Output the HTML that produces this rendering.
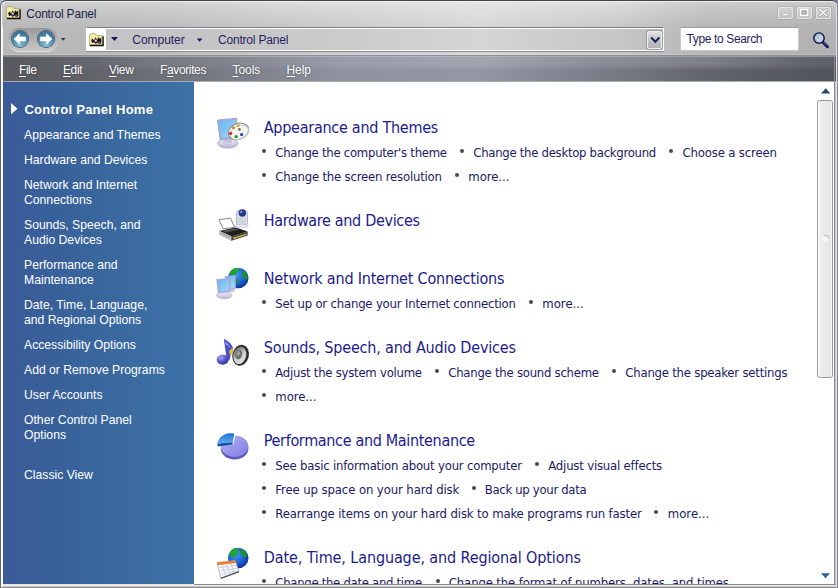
<!DOCTYPE html>
<html lang="en">
<head>
<meta charset="utf-8">
<title>Control Panel</title>
<style>
*{box-sizing:border-box;margin:0;padding:0}
html,body{width:838px;height:588px;overflow:hidden;background:#8a8a8a}
body{position:relative;font-family:"Liberation Sans",sans-serif;font-size:13px;color:#1a1a6e}
.abs{position:absolute;white-space:nowrap}
#win{position:absolute;left:0;top:0;width:838px;height:588px;background:#c6c6c6;border-radius:6px 6px 0 0;overflow:hidden}
#frame{position:absolute;left:0;top:0;width:838px;height:588px;border:1px solid #666;border-top-color:#444;border-right:1.3px solid #80849a;border-bottom:1.5px solid #8a8a8a;border-radius:6px 6px 0 0;z-index:50;pointer-events:none}
#frame2{position:absolute;left:1px;top:1px;width:836px;height:585.5px;border-left:2px solid #fafafa;border-top:1px solid #f0f0f0;border-radius:6px 6px 0 0;z-index:49;pointer-events:none}
#fr{position:absolute;left:835.5px;top:3px;width:1.1px;height:583.5px;background:#e6e6e6;z-index:48}
#fb{position:absolute;left:1px;top:585.2px;width:835.6px;height:1.3px;background:#ececec;z-index:48}
#fb2{position:absolute;left:1px;top:583.6px;width:193px;height:2px;background:#ece6e0;z-index:47}
#gr{position:absolute;left:834.2px;top:55px;width:1.3px;height:530.3px;background:#8c8c8c;z-index:47}
#gb{position:absolute;left:194px;top:583.6px;width:641.5px;height:1.7px;background:#8a8a8a;z-index:47}
#titlebar{position:absolute;left:0;top:0;width:838px;height:56px;background:linear-gradient(#dcdcdc 0,#d2d2d2 8px,#c8c8c8 20px,#c2c2c2 27px,#c0c0c0 50px,#c0c0c0 53.6px,#cbcbcd 54px,#cbcbcd 55px,#8e8e92 55px,#8e8e92 56px)}
#titleshade{position:absolute;left:0;top:0;width:838px;height:55px;background:linear-gradient(90deg,rgba(0,0,0,.05) 0,rgba(0,0,0,.03) 150px,rgba(255,255,255,.10) 300px,rgba(255,255,255,.34) 480px,rgba(255,255,255,.10) 620px,rgba(0,0,0,.05) 700px,rgba(0,0,0,.08) 838px)}
#title{left:26.2px;top:6.8px;font-size:12px;color:#1e1e4e;line-height:15px;letter-spacing:-.2px}
.tt{font-size:12px;color:#1e1e5a;line-height:15px;letter-spacing:-.2px;top:33px}
#navpill{position:absolute;left:7.5px;top:27.5px;width:50px;height:23.5px;border-radius:12px;background:linear-gradient(#999,#adadad 40%,#c8c8c8);box-shadow:0 1px 0 rgba(255,255,255,.6)}
.orb{position:absolute;top:30.8px;width:16px;height:16px;border-radius:50%;background:radial-gradient(circle at 50% 88%,#84c2d2 0,#5492b6 40%,#40789f 70%,#2f6288 100%);box-shadow:0 0 0 1px rgba(40,78,108,.85)}
#addr{position:absolute;left:86px;top:27px;width:578px;height:24px;border:1px solid #fff;border-top-color:#7e7e7e;background:linear-gradient(90deg,#c3c3c5 0,#c5c5c7 120px,#c9c9ca 215px,#d5d5d6 393px,#c6c6c7 533px,#bebebf 578px);box-shadow:inset 0 1px 0 #fff,0 1px 0 #8c8c8c}
#addrico{position:absolute;left:0;top:1px;width:19px;height:21px;background:#fff}
#addrbtn{position:absolute;left:647px;top:30.5px;width:15px;height:18px;border:1px solid #f2f2f2;border-radius:2px;background:linear-gradient(#e4e4e4,#c4c4c6 50%,#b4b4b8);box-shadow:0 0 0 1px #9a9a9e}
#search{position:absolute;left:680px;top:27px;width:119px;height:24px;background:#fff;border:1px solid #c9c9c9;border-top-color:#9c9c9c}
.wb{position:absolute;top:6.7px;width:15px;height:12px;border-radius:2px;background:linear-gradient(#d4d4d4,#c2c2c2);box-shadow:inset 0 0 0 1px rgba(232,232,232,.9),0 0 0 1px rgba(150,150,150,.35)}
#menubar{position:absolute;left:0;top:56px;width:838px;height:26px;background:linear-gradient(90deg,#585a60 0,#5c5e64 50px,#62646a 94px,#6c6e76 146px,#787a84 218px,#9092a0 340px,#9496a4 480px,#787a86 610px,#62646c 710px,#54565e 810px,#52545c 838px)}
#menutop{position:absolute;left:0;top:0;width:838px;height:26px;background:linear-gradient(90deg,#585a60 0,#5e6066 50px,#666870 94px,#767880 146px,#80828c 218px,#9a9caa 340px,#a2a4b0 480px,#8a8c98 610px,#7e8088 710px,#62646c 810px,#5e6068 838px);-webkit-mask-image:linear-gradient(#000 0,#000 32%,transparent 56%);mask-image:linear-gradient(#000 0,#000 32%,transparent 56%)}
#menuhi{position:absolute;left:0;top:0;width:838px;height:1px;background:linear-gradient(90deg,#85878d 0,#a0a2a8 120px,#b6b8c2 420px,#a0a2aa 700px,#8e9096 838px)}
#menubot{position:absolute;left:0;top:25px;width:838px;height:1px;background:#a9abb3}
.menu{color:#fff;font-size:12px;line-height:15px;top:62.5px;text-shadow:0 0 2px rgba(30,30,36,.55)}
.menu u{text-decoration:underline;text-underline-offset:1.6px;text-decoration-thickness:1px}
#side{position:absolute;left:3px;top:82px;width:191px;height:501.6px;background:linear-gradient(90deg,#3a5a98 0,#38619a 30%,#3a6aa0 65%,#3c73a9 100%)}
#main{position:absolute;left:194px;top:82px;width:640px;height:501.6px;background:#fff}
#thumb{position:absolute;left:817.3px;top:99.8px;width:16px;height:277.8px;border:1px solid #999;border-radius:2.5px;background:linear-gradient(90deg,#f4f4f4 0,#ebebeb 30%,#e6e6e6 100%);box-shadow:inset 1px 0 0 #fff,inset -1px 0 0 #f6f6f6}
.s{color:#fff;font-size:12.2px;line-height:15px;left:24px}
.h{font-family:"DejaVu Sans Condensed","Liberation Sans",sans-serif;font-size:16px;line-height:20px;color:#1b1b8c;left:263px}
.t{font-family:"DejaVu Sans Condensed","Liberation Sans",sans-serif;font-size:13px;line-height:16px;color:#1a1a66}
#content{position:absolute;left:0;top:0;width:838px;height:583.6px;overflow:hidden}
.b{position:absolute;width:4px;height:4px;background:#4c4c4c;border-radius:50%}
</style>
</head>
<body>
<div style="position:absolute;left:0;top:0;width:10px;height:10px;background:#b0c0e0"></div><div style="position:absolute;left:828px;top:0;width:10px;height:10px;background:#7c82a2"></div>
<div id="win">
<div id="titlebar"><div id="titleshade"></div></div>
<div class="abs" id="title">Control Panel</div>
<svg class="abs" style="left:6.3px;top:5.8px" width="16" height="14" viewBox="0 0 16 14"><path d="M0.5 12 V2.1 L1.8 0.7 H6.4 L7.8 2.6 H13.6 V12 Z" fill="#f4f0a8" stroke="#9a9462" stroke-width=".7"/><path d="M0.9 12.5 H14.1 V3.2" fill="none" stroke="#0c0c0c" stroke-width="1.3"/><g transform="translate(7.2 7.4) scale(1.12 1.22) translate(-7.3 -7.2)"><path d="M2.8 7 L4 5.6 L5.4 7.2 L6.8 4.6 L8.2 6.8 L9.4 4.4 L10.6 6 L11.8 4.4 V9.7 L9.6 9.9 L8.4 8.9 L7 9.9 L5.4 8.7 L3.6 9.3 Z" fill="#121018"/><circle cx="6.9" cy="7.5" r="1.05" fill="#f6e4f0"/><circle cx="6.9" cy="9" r=".95" fill="#3a1c6c"/><rect x="9.2" y="8" width="1.7" height="1.8" fill="#7c5a12"/></g></svg>
<div class="wb" style="left:777.5px"><svg width="15" height="12" viewBox="0 0 15 12"><rect x="4.6" y="6.6" width="5.4" height="2.2" rx=".8" fill="#fff" stroke="#9a9a9a" stroke-width=".5"/></svg></div>
<div class="wb" style="left:797px"><svg width="15" height="12" viewBox="0 0 15 12"><rect x="3.6" y="2.4" width="7" height="6" fill="none" stroke="#fff" stroke-width="1.3"/><rect x="5.2" y="4" width="3.8" height="2.8" fill="none" stroke="#8e8e8e" stroke-width=".7"/></svg></div>
<div class="wb" style="left:816px"><svg width="15" height="12" viewBox="0 0 15 12"><path d="M3.6 2.2 L10.8 8.8 M10.8 2.2 L3.6 8.8" stroke="#9c9c9c" stroke-width="2.6" stroke-linecap="round"/><path d="M3.6 2.2 L10.8 8.8 M10.8 2.2 L3.6 8.8" stroke="#fff" stroke-width="1.5" stroke-linecap="round"/></svg></div>
<svg class="abs" style="left:811px;top:31px" width="19" height="18" viewBox="0 0 19 18"><defs><linearGradient id="lens" x1="0" y1="0" x2="1" y2="1"><stop offset="0" stop-color="#8fb8d4"/><stop offset=".6" stop-color="#c4d0de"/><stop offset="1" stop-color="#d8d8e4"/></linearGradient></defs><path d="M11.6 10.8 L16.4 15.6" stroke="#12125a" stroke-width="3" stroke-linecap="round"/><path d="M12.6 11 L16.2 14.6" stroke="#6c8cd0" stroke-width=".8" stroke-linecap="round"/><circle cx="8" cy="7.1" r="5.2" fill="url(#lens)" stroke="#10104e" stroke-width="1.4"/></svg>
<svg class="abs" style="left:648px;top:31px;z-index:5" width="15" height="19" viewBox="0 0 15 19"><path d="M3.2 6.6 L7.3 10.8 L11.4 6.6" fill="none" stroke="#1c2460" stroke-width="2.1" stroke-linejoin="miter"/></svg>
<div id="navpill"></div>
<div class="orb" style="left:11.7px"><svg width="16" height="16" viewBox="1 1 16 16" style="display:block"><path d="M3 9 L8.6 3.6 L8.6 6.9 L14.6 6.9 L14.6 11.1 L8.6 11.1 L8.6 14.4 Z" fill="#fff" stroke="#e6f2f8" stroke-width=".6" stroke-linejoin="round"/></svg></div>
<div class="orb" style="left:37.7px"><svg width="16" height="16" viewBox="1 1 16 16" style="display:block"><path d="M15 9 L9.4 3.6 L9.4 6.9 L3.4 6.9 L3.4 11.1 L9.4 11.1 L9.4 14.4 Z" fill="#fff" stroke="#e6f2f8" stroke-width=".6" stroke-linejoin="round"/></svg></div>
<svg class="abs" style="left:60px;top:37px" width="7" height="5" viewBox="0 0 7 5"><polygon points="0.8,1 5.6,1 3.2,3.8" fill="#2a3a48"/></svg>
<div id="addr"><div id="addrico"></div></div>
<svg class="abs" style="left:88.5px;top:32.5px" width="16" height="14" viewBox="0 0 16 14"><path d="M0.5 12 V2.1 L1.8 0.7 H6.4 L7.8 2.6 H13.6 V12 Z" fill="#f4f0a8" stroke="#9a9462" stroke-width=".7"/><path d="M0.9 12.5 H14.1 V3.2" fill="none" stroke="#0c0c0c" stroke-width="1.3"/><g transform="translate(7.2 7.4) scale(1.12 1.22) translate(-7.3 -7.2)"><path d="M2.8 7 L4 5.6 L5.4 7.2 L6.8 4.6 L8.2 6.8 L9.4 4.4 L10.6 6 L11.8 4.4 V9.7 L9.6 9.9 L8.4 8.9 L7 9.9 L5.4 8.7 L3.6 9.3 Z" fill="#121018"/><circle cx="6.9" cy="7.5" r="1.05" fill="#f6e4f0"/><circle cx="6.9" cy="9" r=".95" fill="#3a1c6c"/><rect x="9.2" y="8" width="1.7" height="1.8" fill="#7c5a12"/></g></svg>
<svg class="abs" style="left:110px;top:36px" width="9" height="6" viewBox="0 0 9 6"><polygon points="1,1 8,1 4.5,5" fill="#16165a"/></svg>
<svg class="abs" style="left:196px;top:38px" width="8" height="5" viewBox="0 0 8 5"><polygon points="0.8,0.6 6.4,0.6 3.6,3.8" fill="#16165a"/></svg>
<div class="abs tt" style="left:132.3px;letter-spacing:-.04px">Computer</div>
<div class="abs tt" style="left:218px">Control Panel</div>
<div id="addrbtn"></div>
<div id="search"></div>
<div class="abs tt" style="left:686.5px;top:32px;letter-spacing:-.36px">Type to Search</div>
<div id="menubar"><div id="menutop"></div><div id="menuhi"></div><div id="menubot"></div></div>
<div class="abs menu" style="left:19px;letter-spacing:-.45px"><u>F</u>ile</div>
<div class="abs menu" style="left:63px;letter-spacing:-.4px"><u>E</u>dit</div>
<div class="abs menu" style="left:109px;letter-spacing:-.3px"><u>V</u>iew</div>
<div class="abs menu" style="left:160px;letter-spacing:-.37px">F<u>a</u>vorites</div>
<div class="abs menu" style="left:232.5px;letter-spacing:-.06px"><u>T</u>ools</div>
<div class="abs menu" style="left:286.5px;letter-spacing:-.1px"><u>H</u>elp</div>
<div id="side"></div>
<div id="main"></div>
<svg class="abs" style="left:11px;top:103px" width="7" height="12" viewBox="0 0 7 12"><polygon points="0,0 6.5,5.8 0,11.6" fill="#fff"/></svg>
<div class="abs s" style="top:102px;left:24.4px;font-weight:bold;font-size:13px;letter-spacing:.25px">Control Panel Home</div>
<div class="abs s" style="top:128px">Appearance and Themes</div>
<div class="abs s" style="top:153px">Hardware and Devices</div>
<div class="abs s" style="top:178px">Network and Internet</div>
<div class="abs s" style="top:193px">Connections</div>
<div class="abs s" style="top:218px">Sounds, Speech, and</div>
<div class="abs s" style="top:233px">Audio Devices</div>
<div class="abs s" style="top:258px">Performance and</div>
<div class="abs s" style="top:273px">Maintenance</div>
<div class="abs s" style="top:298px">Date, Time, Language,</div>
<div class="abs s" style="top:313px">and Regional Options</div>
<div class="abs s" style="top:338px">Accessibility Options</div>
<div class="abs s" style="top:363px">Add or Remove Programs</div>
<div class="abs s" style="top:388px">User Accounts</div>
<div class="abs s" style="top:413px">Other Control Panel</div>
<div class="abs s" style="top:428px">Options</div>
<div class="abs s" style="top:468px">Classic View</div>
<div id="content">
<!--ICONS-->
<svg width="0" height="0" style="position:absolute"><defs>
<linearGradient id="scr" x1="0" y1="0" x2="1" y2="1"><stop offset="0" stop-color="#5fb2ee"/><stop offset="1" stop-color="#a9dcfa"/></linearGradient>
<radialGradient id="glb" cx=".4" cy=".35" r=".7"><stop offset="0" stop-color="#3f9af0"/><stop offset=".6" stop-color="#1c5fd0"/><stop offset="1" stop-color="#0b2f8c"/></radialGradient>
<radialGradient id="note" cx=".35" cy=".3" r=".75"><stop offset="0" stop-color="#a6a8f4"/><stop offset=".55" stop-color="#5656cc"/><stop offset="1" stop-color="#2c2c90"/></radialGradient>
<linearGradient id="pie" x1="0" y1="0" x2="1" y2="1"><stop offset="0" stop-color="#b4b2f6"/><stop offset="1" stop-color="#7e7ce0"/></linearGradient>
<linearGradient id="wed" x1="0" y1="0" x2="0" y2="1"><stop offset="0" stop-color="#1f6fd2"/><stop offset="1" stop-color="#5cb0f2"/></linearGradient>
<linearGradient id="spk" x1="0" y1="0" x2="1" y2="1"><stop offset="0" stop-color="#4a4a4a"/><stop offset=".5" stop-color="#c8c8c8"/><stop offset="1" stop-color="#f2f2f2"/></linearGradient>
<linearGradient id="base" x1="0" y1="0" x2="0" y2="1"><stop offset="0" stop-color="#f0eef8"/><stop offset="1" stop-color="#b8b4d4"/></linearGradient>
</defs></svg>
<svg class="abs" style="left:208px;top:108px" width="50" height="50" viewBox="0 0 50 50">
<ellipse cx="19.8" cy="35.3" rx="10" ry="4.8" fill="url(#base)" stroke="#a4a2bc" stroke-width=".8"/>
<path d="M15.5 29.5 h8.5 v5 h-8.5 z" fill="#c6c2de"/>
<path d="M9.8 12.4 L28.4 10.6 L28.6 29.2 L12.4 31.4 Z" fill="url(#scr)" stroke="#a9a5d4" stroke-width="1.7" stroke-linejoin="round"/>
<g transform="rotate(-22 30.5 23.4)"><ellipse cx="30.5" cy="23.4" rx="10.6" ry="7.9" fill="#f7f5ee" stroke="#8a8a96" stroke-width="1"/><ellipse cx="30.9" cy="24.6" rx="9.6" ry="6.6" fill="none" stroke="#c8c8d2" stroke-width=".9"/></g>
<circle cx="22.6" cy="25.4" r="1.7" fill="#e02020"/><circle cx="28.2" cy="28.6" r="1.7" fill="#1a9a2a"/><circle cx="33.6" cy="26.6" r="1.7" fill="#1c4ab8"/><circle cx="25.4" cy="19.8" r="1.5" fill="#d08a20"/><circle cx="30.4" cy="17.4" r="1.5" fill="#c8b420"/><circle cx="31.4" cy="21.4" r="1.4" fill="#6e6e6e"/>
</svg>
<svg class="abs" style="left:208px;top:200px" width="50" height="50" viewBox="0 0 50 50">
<path d="M11 19.6 L22.6 18.2 L26.6 27.4 L15 28.8 Z" fill="#fdfdfd" stroke="#8a8a8a" stroke-width="1"/>
<path d="M11.4 31 L27.8 27.6 L39.6 31.6 L23.4 36.6 Z" fill="#1e1e1e"/><path d="M14.6 30.8 L27.4 28.4 L31 29.6 L18 32.4 Z" fill="#6a6a6a" opacity=".7"/>
<path d="M11.4 31 L23.4 36.6 L23.4 40.6 L11.4 34.4 Z" fill="#e2e2e2" stroke="#9a9a9a" stroke-width=".6"/>
<path d="M23.4 36.6 L39.6 31.6 L39.6 35.6 L23.4 40.8 Z" fill="#3a3a3a"/>
<path d="M25 37.6 L38.6 33.4 L38.6 35 L25 39.4 Z" fill="#c9a648"/>
<path d="M12.4 32.4 L22.4 37.2 M12.4 33.6 L22.4 38.6" stroke="#707070" stroke-width=".6"/>
<path d="M28.4 13.6 Q28 10.4 31.4 10.4 H36.6 Q39.6 10.8 39.4 14 L39.6 23 Q39.6 25.6 34 26 Q28.2 26 28.2 23 Z" fill="#dedeee" stroke="#a4a4c0" stroke-width=".8"/>
<path d="M29.4 17.6 H38 V23.4 H29.4 Z" fill="#c6d6d2" opacity=".8"/>
<circle cx="34.3" cy="13" r="3.7" fill="#24348a"/><circle cx="33.3" cy="12" r="1.2" fill="#8c9ce0"/>
<ellipse cx="33.6" cy="26" rx="7" ry="1.6" fill="#e6e6f2" stroke="#b0b0c8" stroke-width=".5"/>
</svg>
<svg class="abs" style="left:208px;top:258px" width="50" height="50" viewBox="0 0 50 50">
<circle cx="30.2" cy="20" r="10.3" fill="url(#glb)"/>
<path d="M21.4 16 Q22.6 11 28 10 Q33 9.6 31 12.6 Q28.4 13.6 27.6 16.4 Q25 18.6 21.4 16 Z" fill="#1fa62e"/>
<path d="M33.6 13.6 Q37.8 13 39.6 17.6 Q40 21 37.6 22 Q35 20.6 34.4 17.6 Z" fill="#18942a"/>
<path d="M27.2 21.4 Q29.6 20.6 30.6 23.4 Q30 26.6 27.8 25.6 Z" fill="#169028"/>
<path d="M17.4 18.6 L27 17.8 L27.2 30.6 L18.6 31.6 Z" fill="url(#scr)" stroke="#aaa8d4" stroke-width="1.3" stroke-linejoin="round"/>
<ellipse cx="16.2" cy="37.4" rx="7.6" ry="3.4" fill="url(#base)" stroke="#b0acc8" stroke-width=".7"/>
<path d="M22 31.4 l4.6-.4 v2.6 l-4.6 1 z" fill="#c8c4e0"/>
<path d="M9 21.6 L21.4 20.6 L21.6 33 L10.6 34.6 Z" fill="url(#scr)" stroke="#aaa8d4" stroke-width="1.4" stroke-linejoin="round"/>
</svg>
<svg class="abs" style="left:208px;top:328px" width="50" height="50" viewBox="0 0 50 50">
<g transform="rotate(14 32.6 27.2)"><ellipse cx="32.6" cy="27.2" rx="8.2" ry="10.6" fill="#2c2c2c"/><ellipse cx="31.8" cy="27.6" rx="6.4" ry="8.8" fill="url(#spk)"/><ellipse cx="30.6" cy="27" rx="3.4" ry="4.8" fill="#6c746c"/><ellipse cx="30" cy="26" rx="1.6" ry="2.6" fill="#9aa49c"/></g>
<path d="M16 12 Q15.6 10.4 17.2 11.4 Q23.4 14.6 25 20 Q25.4 23.4 22.6 27.8 L21.2 32.6 L18.8 32 Z" fill="#4c4cc4"/>
<path d="M17.4 13.6 Q21.6 16.6 22.6 21 Q21 17.6 17.6 16.6 Z" fill="#9a9af0"/>
<path d="M21.4 22.4 Q24.4 20 25 19.4 Q25.6 23.6 22.8 27.6 Q21 26 21.4 22.4 Z" fill="#e4c428"/>
<ellipse cx="14.6" cy="31.8" rx="5.9" ry="5" fill="url(#note)"/>
</svg>
<svg class="abs" style="left:208px;top:420px" width="50" height="50" viewBox="0 0 50 50">
<ellipse cx="26.6" cy="28.6" rx="13.8" ry="10.8" fill="#5c5abc"/>
<ellipse cx="26.6" cy="26.2" rx="13.8" ry="10.6" fill="url(#pie)"/>
<path d="M9.4 23.6 L9.6 26.6 L24 24.6 L24.6 22 Z" fill="#174e9e"/>
<path d="M24.8 22.6 L9.4 23.6 Q10.4 17.6 16.6 14.6 Q21.4 12.6 26.4 13.6 Z" fill="url(#wed)"/>
<path d="M24.8 22.6 L26.4 13.6 L27.8 14 L25.4 24.8 Z" fill="#f4f4fc"/>
</svg>
<svg class="abs" style="left:208px;top:538px" width="50" height="50" viewBox="0 0 50 50">
<circle cx="30.2" cy="20" r="10.3" fill="url(#glb)"/>
<path d="M21.4 16 Q22.6 11 27.6 10 Q30.6 10.6 30 14.6 Q28.6 18.6 25.4 19.4 Q22.4 18.6 21.4 16 Z" fill="#1fa62e"/>
<path d="M31.6 11.6 Q36 11 38.6 15.6 Q38.6 19 36.6 19.4 Q33.6 17.6 32.4 14.6 Z" fill="#18942a"/>
<path d="M9 24.4 L27.2 22.6 L31 33.6 L12.8 40.4 Z" fill="#fbfbfd" stroke="#9c9cac" stroke-width=".7"/>
<path d="M9 24.4 L27.2 22.6 L28 25 L9.8 27.2 Z" fill="#f07e2c"/>
<path d="M10.8 29.8 L28.8 27.2 M11.6 33 L29.8 30 M12.4 36.4 L30.6 32.6 M14.4 27 L17.6 38.4 M18.6 26.4 L22 36.8 M23 26 L26.4 35.2" stroke="#b8c4e2" stroke-width=".8"/>
<path d="M12.8 40.4 L31 33.6" stroke="#555" stroke-width="1.2"/>
</svg>
<!--/ICONS-->
<!--MAIN-->
<div class="abs h" style="left:263.8px;top:118.0px;letter-spacing:-0.268px">Appearance and Themes</div>
<div class="abs h" style="left:263.8px;top:211.0px;letter-spacing:-0.330px">Hardware and Devices</div>
<div class="abs h" style="left:263.8px;top:269.0px;letter-spacing:-0.202px">Network and Internet Connections</div>
<div class="abs h" style="left:263.8px;top:338.0px;letter-spacing:-0.183px">Sounds, Speech, and Audio Devices</div>
<div class="abs h" style="left:263.8px;top:431.0px;letter-spacing:-0.336px">Performance and Maintenance</div>
<div class="abs h" style="left:263.8px;top:548.0px;letter-spacing:-0.116px">Date, Time, Language, and Regional Options</div>
<div class="b" style="left:262px;top:149px"></div>
<div class="abs t" style="left:275.3px;top:145.0px;letter-spacing:-0.264px">Change the computer&#39;s theme</div>
<div class="b" style="left:460px;top:149px"></div>
<div class="abs t" style="left:473.3px;top:145.0px;letter-spacing:-0.287px">Change the desktop background</div>
<div class="b" style="left:669px;top:149px"></div>
<div class="abs t" style="left:682.5px;top:145.0px;letter-spacing:-0.156px">Choose a screen</div>
<div class="b" style="left:262px;top:173px"></div>
<div class="abs t" style="left:275.3px;top:169.0px;letter-spacing:-0.197px">Change the screen resolution</div>
<div class="b" style="left:455px;top:173px"></div>
<div class="abs t" style="left:468.3px;top:169.0px;letter-spacing:-0.058px">more...</div>
<div class="b" style="left:262px;top:300px"></div>
<div class="abs t" style="left:275.3px;top:296.0px;letter-spacing:-0.195px">Set up or change your Internet connection</div>
<div class="b" style="left:529px;top:300px"></div>
<div class="abs t" style="left:542.3px;top:296.0px;letter-spacing:0.013px">more...</div>
<div class="b" style="left:262px;top:369px"></div>
<div class="abs t" style="left:275.3px;top:365.0px;letter-spacing:-0.249px">Adjust the system volume</div>
<div class="b" style="left:435px;top:369px"></div>
<div class="abs t" style="left:448.3px;top:365.0px;letter-spacing:-0.255px">Change the sound scheme</div>
<div class="b" style="left:612px;top:369px"></div>
<div class="abs t" style="left:625.3px;top:365.0px;letter-spacing:-0.221px">Change the speaker settings</div>
<div class="b" style="left:262px;top:393px"></div>
<div class="abs t" style="left:275.3px;top:389.0px;letter-spacing:-0.058px">more...</div>
<div class="b" style="left:262px;top:462px"></div>
<div class="abs t" style="left:275.3px;top:458.0px;letter-spacing:-0.199px">See basic information about your computer</div>
<div class="b" style="left:535px;top:462px"></div>
<div class="abs t" style="left:548.3px;top:458.0px;letter-spacing:-0.196px">Adjust visual effects</div>
<div class="b" style="left:262px;top:486px"></div>
<div class="abs t" style="left:275.3px;top:482.0px;letter-spacing:-0.101px">Free up space on your hard disk</div>
<div class="b" style="left:472px;top:486px"></div>
<div class="abs t" style="left:484.8px;top:482.0px;letter-spacing:-0.324px">Back up your data</div>
<div class="b" style="left:262px;top:510px"></div>
<div class="abs t" style="left:275.3px;top:506.0px;letter-spacing:-0.132px">Rearrange items on your hard disk to make programs run faster</div>
<div class="b" style="left:654px;top:510px"></div>
<div class="abs t" style="left:667.8px;top:506.0px;letter-spacing:0.013px">more...</div>
<div class="b" style="left:262px;top:579px"></div>
<div class="abs t" style="left:275.3px;top:575.0px;letter-spacing:-0.298px">Change the date and time</div>
<div class="b" style="left:436px;top:579px"></div>
<div class="abs t" style="left:448.8px;top:575.0px;letter-spacing:-0.139px">Change the format of numbers, dates, and times</div>
<!--/MAIN-->
</div>
<div id="thumb"></div>
<svg class="abs" style="left:820px;top:87px" width="12" height="8" viewBox="0 0 12 8"><polygon points="1,6.4 10.4,6.4 5.7,1.2" fill="#1f4a72"/></svg>
<svg class="abs" style="left:820px;top:572px" width="12" height="8" viewBox="0 0 12 8"><polygon points="1,1.2 10,1.2 5.5,6.2" fill="#2c6294"/></svg>
<svg class="abs" style="left:820px;top:232px" width="11" height="12" viewBox="0 0 11 12"><circle cx="5.6" cy="6.4" r="3.6" fill="#f6f6f6"/><path d="M3.6 3.6 A3.8 3.8 0 0 1 9 6.6" fill="none" stroke="#c9c9c9" stroke-width="1.6"/></svg>
</div>
<div id="fr"></div><div id="fb"></div><div id="fb2"></div><div id="gr"></div><div id="gb"></div>
<div id="frame2"></div>
<div style="position:absolute;left:2px;top:4px;width:1px;height:23px;background:#d0d0d0;z-index:49"></div>
<div id="frame"></div>
</body>
</html>
